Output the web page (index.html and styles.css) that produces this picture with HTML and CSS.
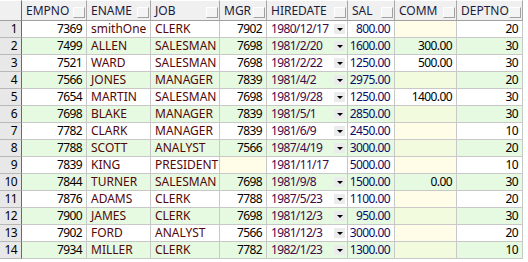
FILE: index.html
```html
<!DOCTYPE html>
<html>
<head>
<meta charset="utf-8">
<link rel="stylesheet" href="styles.css">
</head>
<body>
<div class="grid">
  <div class="row head">
    <div class="c rn"></div>
    <div class="c h"><span>EMPNO</span><i class="hb"></i></div>
    <div class="c h"><span>ENAME</span><i class="hb"></i></div>
    <div class="c h"><span>JOB</span><i class="hb"></i></div>
    <div class="c h"><span>MGR</span><i class="hb"></i></div>
    <div class="c h"><span>HIREDATE</span><i class="hb"></i></div>
    <div class="c h"><span>SAL</span><i class="hb"></i></div>
    <div class="c h"><span>COMM</span><i class="hb"></i></div>
    <div class="c h"><span>DEPTNO</span><i class="hb"></i></div>
  </div>

  <div class="row odd"><div class="c rn">1</div><div class="c num">7369</div><div class="c str">smithOne</div><div class="c str">CLERK</div><div class="c num">7902</div><div class="c date"><span>1980/12/17</span><i class="dd"></i></div><div class="c num sal">800.00</div><div class="c num null"></div><div class="c num">20</div></div>
  <div class="row even"><div class="c rn">2</div><div class="c num">7499</div><div class="c str">ALLEN</div><div class="c str">SALESMAN</div><div class="c num">7698</div><div class="c date"><span>1981/2/20</span><i class="dd"></i></div><div class="c num sal">1600.00</div><div class="c num">300.00</div><div class="c num">30</div></div>
  <div class="row odd"><div class="c rn">3</div><div class="c num">7521</div><div class="c str">WARD</div><div class="c str">SALESMAN</div><div class="c num">7698</div><div class="c date"><span>1981/2/22</span><i class="dd"></i></div><div class="c num sal">1250.00</div><div class="c num">500.00</div><div class="c num">30</div></div>
  <div class="row even"><div class="c rn">4</div><div class="c num">7566</div><div class="c str">JONES</div><div class="c str">MANAGER</div><div class="c num">7839</div><div class="c date"><span>1981/4/2</span><i class="dd"></i></div><div class="c num sal">2975.00</div><div class="c num null"></div><div class="c num">20</div></div>
  <div class="row odd"><div class="c rn">5</div><div class="c num">7654</div><div class="c str">MARTIN</div><div class="c str">SALESMAN</div><div class="c num">7698</div><div class="c date"><span>1981/9/28</span><i class="dd"></i></div><div class="c num sal">1250.00</div><div class="c num">1400.00</div><div class="c num">30</div></div>
  <div class="row even"><div class="c rn">6</div><div class="c num">7698</div><div class="c str">BLAKE</div><div class="c str">MANAGER</div><div class="c num">7839</div><div class="c date"><span>1981/5/1</span><i class="dd"></i></div><div class="c num sal">2850.00</div><div class="c num null"></div><div class="c num">30</div></div>
  <div class="row odd"><div class="c rn">7</div><div class="c num">7782</div><div class="c str">CLARK</div><div class="c str">MANAGER</div><div class="c num">7839</div><div class="c date"><span>1981/6/9</span><i class="dd"></i></div><div class="c num sal">2450.00</div><div class="c num null"></div><div class="c num">10</div></div>
  <div class="row even"><div class="c rn">8</div><div class="c num">7788</div><div class="c str">SCOTT</div><div class="c str">ANALYST</div><div class="c num">7566</div><div class="c date"><span>1987/4/19</span><i class="dd"></i></div><div class="c num sal">3000.00</div><div class="c num null"></div><div class="c num">20</div></div>
  <div class="row odd"><div class="c rn">9</div><div class="c num">7839</div><div class="c str">KING</div><div class="c str">PRESIDENT</div><div class="c num null"></div><div class="c date"><span>1981/11/17</span></div><div class="c num sal">5000.00</div><div class="c num null"></div><div class="c num">10</div></div>
  <div class="row even"><div class="c rn">10</div><div class="c num">7844</div><div class="c str">TURNER</div><div class="c str">SALESMAN</div><div class="c num">7698</div><div class="c date"><span>1981/9/8</span><i class="dd"></i></div><div class="c num sal">1500.00</div><div class="c num">0.00</div><div class="c num">30</div></div>
  <div class="row odd"><div class="c rn">11</div><div class="c num">7876</div><div class="c str">ADAMS</div><div class="c str">CLERK</div><div class="c num">7788</div><div class="c date"><span>1987/5/23</span><i class="dd"></i></div><div class="c num sal">1100.00</div><div class="c num null"></div><div class="c num">20</div></div>
  <div class="row even"><div class="c rn">12</div><div class="c num">7900</div><div class="c str">JAMES</div><div class="c str">CLERK</div><div class="c num">7698</div><div class="c date"><span>1981/12/3</span><i class="dd"></i></div><div class="c num sal">950.00</div><div class="c num null"></div><div class="c num">30</div></div>
  <div class="row odd"><div class="c rn">13</div><div class="c num">7902</div><div class="c str">FORD</div><div class="c str">ANALYST</div><div class="c num">7566</div><div class="c date"><span>1981/12/3</span><i class="dd"></i></div><div class="c num sal">3000.00</div><div class="c num null"></div><div class="c num">20</div></div>
  <div class="row even"><div class="c rn">14</div><div class="c num">7934</div><div class="c str">MILLER</div><div class="c str">CLERK</div><div class="c num">7782</div><div class="c date"><span>1982/1/23</span><i class="dd"></i></div><div class="c num sal">1300.00</div><div class="c num null"></div><div class="c num">10</div></div>
</div>
</body>
</html>
```

FILE: styles.css
```css
html, body {
  margin: 0;
  padding: 0;
  background: #ffffff;
}

.grid {
  width: 523px;
  font-family: "Noto Sans", "DejaVu Sans", sans-serif;
  font-size: 12px;
  color: #000000;
}

.row {
  display: grid;
  grid-template-columns: 22px 65px 64px 69px 47px 81px 47px 62px 66px;
  height: 17px;
}

.row.head {
  height: 21px;
  background: #f0f0f0;
}

.c {
  box-sizing: border-box;
  border-right: 1px solid #c8c8c8;
  border-bottom: 1px solid #c8c8c8;
  padding: 0 4px;
  display: flex;
  align-items: center;
  white-space: nowrap;
  overflow: hidden;
  line-height: 16px;
}

.head .c {
  border-right: 1px solid #a8a8a8;
  border-bottom: 1px solid #a0a0a0;
  border-top: 1px solid #ffffff;
  padding: 1px 1px 0 4px;
  color: #1c1c3c;
}

.head .c.rn {
  background: #f0f0f0;
  border-right: 1px solid #6a6a6a;
}

.hb {
  box-sizing: border-box;
  margin-left: auto;
  width: 12px;
  height: 11px;
  margin-top: 2px;
  background: #f4f4f4;
  border-top: 1px solid #ffffff;
  border-left: 1px solid #ffffff;
  border-right: 1px solid #a0a0a0;
  border-bottom: 1px solid #a0a0a0;
}

.rn {
  background: #e8e8e8;
  justify-content: flex-end;
  border-right: 1px solid #6a6a6a;
  border-bottom: 1px solid #b8b8b8;
  padding: 0 4px 0 0;
  letter-spacing: -0.6px;
}

.even {
  background: #e6f9e1;
}

.odd {
  background: #ffffff;
}

.num {
  justify-content: flex-end;
  padding-right: 4px;
  letter-spacing: -0.6px;
}

.str {
  color: #520808;
}

.sal {
  color: #0c0c66;
}

.date {
  color: #3e0a4a;
  padding-right: 2px;
  letter-spacing: -0.65px;
}

.dd {
  margin-left: auto;
  flex: none;
  width: 11px;
  height: 10px;
  background: #ebebeb;
  display: flex;
  align-items: center;
  justify-content: center;
}

.dd::after {
  content: "";
  width: 0;
  height: 0;
  border-left: 3px solid transparent;
  border-right: 3px solid transparent;
  border-top: 3px solid #000000;
}

.odd .null {
  background: #fffde7;
}

.even .null {
  background: #f3fbdf;
}
```
